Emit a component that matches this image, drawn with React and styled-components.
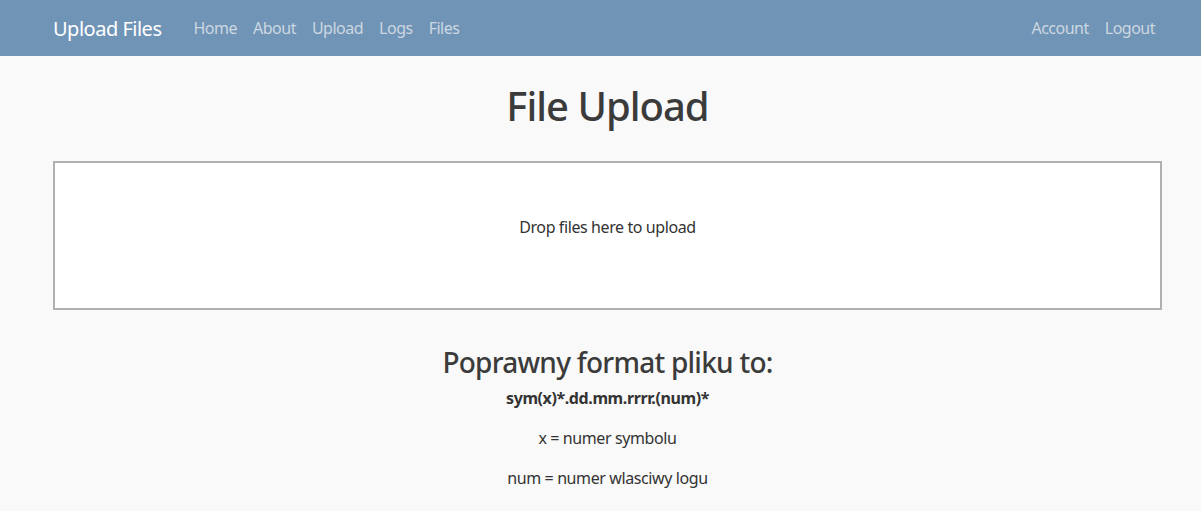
import React from 'react';
import styled, { createGlobalStyle } from 'styled-components';

const GlobalStyle = createGlobalStyle`
  body {
    margin: 0;
    background: #f9f9f9;
    font-family: "Noto Sans", "Open Sans", sans-serif;
    color: #333333;
    letter-spacing: -0.4px;
  }
`;

const Navbar = styled.nav`
  display: flex;
  align-items: center;
  height: 56px;
  padding: 0 46px 0 53px;
  background: #6f94b6;
`;

const Brand = styled.a`
  font-size: 20px;
  letter-spacing: -0.5px;
  color: #ffffff;
  margin-right: 24px;
  text-decoration: none;
`;

const NavList = styled.div`
  display: flex;
  align-items: center;
  margin-left: ${(props) => (props.right ? 'auto' : '0')};
`;

const NavLink = styled.a`
  font-size: 16px;
  letter-spacing: -0.5px;
  color: #cdd7e1;
  padding: 0 8px;
  text-decoration: none;
  &:last-child {
    padding-right: 0;
  }
`;

const Main = styled.main`
  width: 1109px;
  margin-left: 53px;
  text-align: center;
`;

const Title = styled.h1`
  margin: 26px 0 0;
  font-size: 40px;
  font-weight: 500;
  letter-spacing: -1px;
  line-height: 1.2;
  color: #3b3b3b;
`;

const DropZone = styled.div`
  box-sizing: border-box;
  height: 149px;
  margin-top: 31px;
  padding-top: 52px;
  border: 2px solid #b0b0b0;
  background: #ffffff;
  font-size: 16px;
  line-height: 24px;
`;

const Subtitle = styled.h3`
  margin: 36px 0 6px;
  font-size: 28px;
  font-weight: 500;
  letter-spacing: -0.75px;
  line-height: 1.2;
  color: #3b3b3b;
`;

const Line = styled.p`
  margin: 0 0 16px;
  font-size: 16px;
  line-height: 24px;
  font-weight: ${(props) => (props.bold ? 700 : 400)};
`;

const App = () => {
  return (
    <>
      <GlobalStyle />
      <Navbar>
        <Brand>Upload Files</Brand>
        <NavList>
          <NavLink>Home</NavLink>
          <NavLink>About</NavLink>
          <NavLink>Upload</NavLink>
          <NavLink>Logs</NavLink>
          <NavLink>Files</NavLink>
        </NavList>
        <NavList right>
          <NavLink>Account</NavLink>
          <NavLink>Logout</NavLink>
        </NavList>
      </Navbar>
      <Main>
        <Title>File Upload</Title>
        <DropZone>Drop files here to upload</DropZone>
        <Subtitle>Poprawny format pliku to:</Subtitle>
        <Line bold>sym(x)*.dd.mm.rrrr.(num)*</Line>
        <Line>x = numer symbolu</Line>
        <Line>num = numer wlasciwy logu</Line>
      </Main>
    </>
  );
};

export default App;
